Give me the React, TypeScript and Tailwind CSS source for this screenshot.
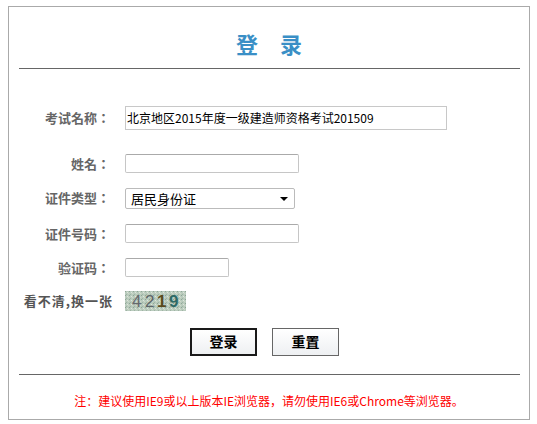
import React from "react";

const font = { fontFamily: '"Noto Sans CJK SC", "Liberation Sans", sans-serif' };
const labelFont = { fontFamily: '"Noto Sans CJK TC", "Noto Sans CJK SC", sans-serif' };

const fields = [
  { label: "姓名：", kind: "text", width: "w-[174px]", gap: "mt-[24px]" },
  { label: "证件类型：", kind: "select", width: "w-[170px]", gap: "mt-[14px]" },
  { label: "证件号码：", kind: "text", width: "w-[174px]", gap: "mt-[15px]" },
  { label: "验证码：", kind: "text", width: "w-[104px]", gap: "mt-[15px]" },
];

const Captcha = () => (
  <svg width="61" height="20" viewBox="0 0 61 20">
    <defs>
      <pattern id="noise" width="4" height="4" patternUnits="userSpaceOnUse">
        <rect width="4" height="4" fill="#b9cbbd" />
        <rect x="0" y="0" width="1" height="1" fill="#8fa596" />
        <rect x="2" y="1" width="1" height="1" fill="#dfe6dc" />
        <rect x="1" y="3" width="1" height="1" fill="#9fb3a4" />
        <rect x="3" y="2" width="1" height="1" fill="#cfd9c9" />
      </pattern>
    </defs>
    <rect width="61" height="20" fill="url(#noise)" />
    <text x="7" y="16" fontSize="17" fontFamily="Liberation Sans" fill="#66696d">4</text>
    <text x="20" y="16" fontSize="17" fontFamily="Liberation Sans" fill="#5d6468">2</text>
    <text x="32" y="16" fontSize="17" fontFamily="Liberation Sans" fontWeight="bold" fill="#5a4a1e">1</text>
    <text x="44" y="16" fontSize="17" fontFamily="Liberation Sans" fontWeight="bold" fill="#2f6a66">9</text>
  </svg>
);

export default function App() {
  return (
    <div className="w-[537px] h-[424px] bg-white pt-[6px] pl-[8px]" style={font}>
      <div className="w-[522px] h-[414px] border border-[#aaaaaa]">
        <div className="mt-[21px] h-[30px] leading-[30px] text-center text-[22px] font-bold text-[#3a8fc6]">
          登　录
        </div>
        <div className="mt-[10px] ml-[10px] w-[501px] h-px bg-[#666666]" />

        <div className="mt-[37px] flex items-center">
          <div className="w-[101px] text-right text-[13px] font-bold text-[#666666]" style={labelFont}>
            考试名称：
          </div>
          <div className="ml-[15px] w-[322px] h-[24px] border border-[#c8c8c8] pl-[1px] text-[12px] leading-[22px] text-black">
            北京地区2015年度一级建造师资格考试201509
          </div>
        </div>

        {fields.map((f) => (
          <div key={f.label} className={`${f.gap} flex items-center`}>
            <div className="w-[101px] text-right text-[13px] font-bold text-[#666666]" style={labelFont}>
              {f.label}
            </div>
            {f.kind === "select" ? (
              <div className={`ml-[15px] relative ${f.width} h-[21px] border border-[#bbbbbb] rounded-[2px]`}>
                <div className="pl-[5px] text-[13px] leading-[19px] text-black">居民身份证</div>
                <div className="absolute right-[6px] top-[8px] w-0 h-0 border-l-[4px] border-r-[4px] border-t-[4px] border-l-transparent border-r-transparent border-t-black" />
              </div>
            ) : (
              <input
                className={`ml-[15px] ${f.width} h-[19px] border border-[#c6c6c6] border-t-[#aaaaaa] rounded-[2px] outline-none`}
              />
            )}
          </div>
        ))}

        <div className="mt-[13px] flex items-center">
          <div className="w-[104px] text-right text-[13px] tracking-[1px] font-semibold text-[#555555]">看不清,换一张</div>
          <div className="ml-[12px] h-[20px]">
            <Captcha />
          </div>
        </div>

        <div className="mt-[17px] flex justify-center gap-[15px] pr-[9px]">
          <button className="w-[67px] h-[28px] border-2 border-[#1a1a1a] bg-gradient-to-b from-white to-[#eef0f2] text-[14px] font-bold text-black">
            登录
          </button>
          <button className="w-[67px] h-[28px] border border-[#666666] bg-gradient-to-b from-white to-[#eef0f2] text-[14px] font-bold text-black">
            重置
          </button>
        </div>

        <div className="mt-[18px] ml-[10px] w-[501px] h-px bg-[#666666]" />

        <div className="mt-[18px] text-center text-[12px] leading-[16px] text-[#ff0000]">
          注：建议使用IE9或以上版本IE浏览器，请勿使用IE6或Chrome等浏览器。
        </div>
      </div>
    </div>
  );
}
